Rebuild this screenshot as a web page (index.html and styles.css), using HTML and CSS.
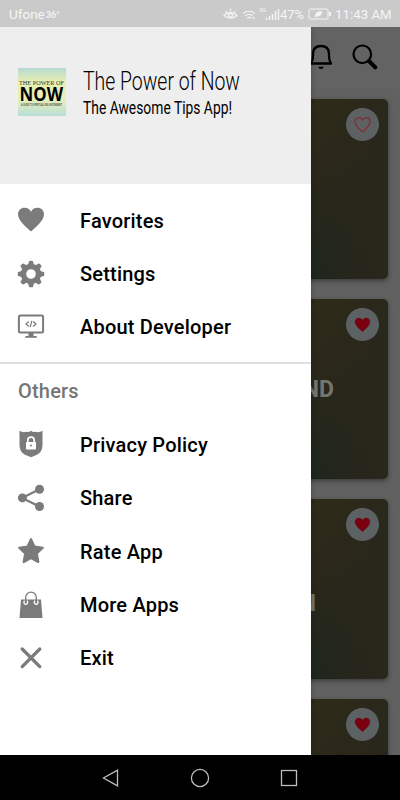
FILE: index.html
```
<!DOCTYPE html>
<html lang="en">
<head>
<meta charset="utf-8">
<title>The Power of Now</title>
<link rel="stylesheet" href="styles.css">
</head>
<body>
<svg class="defs" width="0" height="0">
  <defs>
    <path id="heart" d="M12 21.4C8 17.8 1 12.2 1 6.9 1 3.4 3.6 1 6.7 1 9.100 1 11 2.300 12 4.300 13 2.300 14.900 1 17.300 1 20.400 1 23 3.400 23 6.900 23 12.200 16 17.800 12 21.400Z"/>
  </defs>
</svg>
<div class="screen">
  <div class="status">
    <span class="carrier">Ufone</span><span class="temp">36°</span>
    <svg class="status-icons" width="71" height="20" viewBox="0 0 71 20" fill="none" stroke="#f4f4f4">
      <path d="M3 11.500Q9.500 5 16 11.500Q9.500 17 3 11.500ZM4.500 7L6 8.500M9.500 4.500V7M14.500 7L13 8.500" stroke-width="1.200"/>
      <circle cx="9.500" cy="11.300" r="2" stroke-width="1.500"/>
      <path d="M22 9.500Q28 5 34 9.500M24 12Q28 8.500 32 12M26 14.200Q28 12.500 30 14.200M31 14h3" stroke-width="1.200"/>
      <text x="38" y="8" class="net">3G</text>
      <path d="M45.500 16v-2M48.500 16v-4M51.500 16v-6M54.500 16v-9M57.500 16V5" stroke-width="1.500"/>
    </svg>
    <span class="percent">47%</span>
    <svg class="battery" width="24" height="14" viewBox="0 0 24 14" fill="none" stroke="#f4f4f4">
      <rect x="1" y="2" width="19" height="10" rx="1"/>
      <path d="M22 5v4" stroke-width="2"/>
      <path d="M7 11Q6 4 14 4Q14 10 8 9.500Z" fill="#f4f4f4" stroke="none"/>
    </svg>
    <span class="clock">11:43 AM</span>
  </div>
  <div class="stage">
    <main class="page">
      <header class="toolbar">
        <svg class="bell" width="28" height="28" viewBox="0 0 28 28" fill="none" stroke="#000" stroke-width="2.300">
          <path d="M4 20.500C6.500 17 6 14 6 11C6 6 9 3 14 3S22 6 22 11C22 14 21.500 17 24 20.500Z" stroke-linejoin="round"/>
          <path d="M11.300 23.800h5.400q-.5 2.200-2.700 2.200t-2.700-2.200Z" fill="#000" stroke="none"/>
        </svg>
        <svg class="search" width="26" height="26" viewBox="0 0 26 26" fill="none" stroke="#000">
          <circle cx="10.300" cy="10.300" r="8.800" stroke-width="2.200"/>
          <path d="M17 17L23.300 23.300" stroke-width="4" stroke-linecap="round"/>
        </svg>
      </header>
      <section class="cards">
        <article class="card"><span class="fav"><svg width="17" height="16" viewBox="0 0 24 23"><use href="#heart" fill="none" stroke="#8a2733" stroke-width="1.700"/></svg></span></article>
        <article class="card"><span class="fav"><svg width="17" height="16" viewBox="0 0 24 23"><use href="#heart" fill="#78000f"/></svg></span><p class="quote">ND</p></article>
        <article class="card"><span class="fav"><svg width="17" height="16" viewBox="0 0 24 23"><use href="#heart" fill="#78000f"/></svg></span><p class="quote short">N</p></article>
        <article class="card"><span class="fav"><svg width="17" height="16" viewBox="0 0 24 23"><use href="#heart" fill="#78000f"/></svg></span></article>
      </section>
    </main>
    <aside class="drawer">
      <div class="brand">
        <svg class="cover" width="48" height="48" viewBox="0 0 48 48">
          <defs>
            <linearGradient id="sky" x1="0" y1="0" x2="0" y2="1">
              <stop offset="0" stop-color="#b6d9d4"/><stop offset=".3" stop-color="#e9efb0"/>
              <stop offset=".65" stop-color="#e8efba"/><stop offset="1" stop-color="#b9ded6"/>
            </linearGradient>
          </defs>
          <rect width="48" height="48" fill="url(#sky)"/>
          <text class="cover-top" x="1" y="16.800" textLength="45" lengthAdjust="spacingAndGlyphs">THE POWER OF</text>
          <text class="cover-now" x="1.500" y="33" textLength="43.500" lengthAdjust="spacingAndGlyphs">NOW</text>
          <text class="cover-sub" x="3" y="37.800" textLength="41" lengthAdjust="spacingAndGlyphs">A GUIDE TO SPIRITUAL ENLIGHTENMENT</text>
        </svg>
        <svg class="titles" width="162" height="56" viewBox="0 0 162 56">
          <text class="title" x="0" y="25.500" textLength="157" lengthAdjust="spacingAndGlyphs">The Power of Now</text>
          <text class="subtitle" x="0" y="49.500" textLength="149" lengthAdjust="spacingAndGlyphs">The Awesome Tips App!</text>
        </svg>
      </div>
      <nav class="menu">
        <a class="item"><svg class="icon" viewBox="0 0 28 28"><path d="M14 25.500C9 21 1 14.500 1 8.300 1 4.500 4 1.800 7.500 1.800 10.500 1.800 12.800 3.300 14 5.800 15.200 3.300 17.500 1.800 20.500 1.800 24 1.800 27 4.500 27 8.300 27 14.500 19 21 14 25.500Z"/></svg><span>Favorites</span></a>
        <a class="item"><svg class="icon" viewBox="0 0 28 28"><g><circle cx="14" cy="14" r="7.500" fill="none" stroke="#7b7b7b" stroke-width="5.400"/><g id="teeth"><path id="tooth" d="M10.800 5.500L12 1.200Q12.200.7 14 .7T16 1.200L17.200 5.500Z"/><use href="#tooth" transform="rotate(45 14 14)"/><use href="#tooth" transform="rotate(90 14 14)"/><use href="#tooth" transform="rotate(135 14 14)"/></g><use href="#teeth" transform="rotate(180 14 14)"/></g></svg><span>Settings</span></a>
        <a class="item"><svg class="icon" viewBox="0 0 28 28"><rect x="1.900" y="2.500" width="24.200" height="17" rx="1.500" fill="none" stroke="#7b7b7b" stroke-width="2"/><path d="M11.500 20h5v3h2.500q1 0 1 1.800H8q0-1.800 1-1.800h2.500Z"/><path d="M11.800 8.500L9 11l2.800 2.500M16.200 8.500L19 11l-2.800 2.500M14.800 7.800l-1.600 6.400" fill="none" stroke="#7b7b7b" stroke-width="1.200"/></svg><span>About Developer</span></a>
        <div class="divider"></div>
        <h2 class="heading">Others</h2>
        <a class="item"><svg class="icon" viewBox="0 0 28 28"><path d="M2.500.8Q6 3 9 1.800Q12 2.500 14 .8Q16 2.500 19 1.800Q22 3 25.500.8V15Q25.500 22 20 24.800L14 27.300 8 24.800Q2.500 22 2.500 15Z"/><rect x="9" y="12" width="10" height="7.500" rx=".8" fill="#fff"/><path d="M10.800 12.500v-2.200a3.200 3.200 0 0 1 6.400 0v2.200" fill="none" stroke="#fff" stroke-width="1.700"/><circle cx="14" cy="15.600" r="1"/></svg><span>Privacy Policy</span></a>
        <a class="item"><svg class="icon" viewBox="0 0 28 28"><path d="M22.500 5.200L5 14l17.500 8.500" fill="none" stroke="#7b7b7b" stroke-width="2.200"/><circle cx="22.500" cy="5.200" r="4.500"/><circle cx="5.400" cy="13.900" r="4.500"/><circle cx="22.500" cy="22.500" r="4.500"/></svg><span>Share</span></a>
        <a class="item"><svg class="icon" viewBox="0 0 28 28"><path d="M14 2.200L17.500 9.700 25.800 10.800 19.800 16.500 21.300 25 14 21 6.700 25 8.200 16.500 2.200 10.800 10.500 9.700Z" stroke="#7b7b7b" stroke-width="2.200" stroke-linejoin="round"/></svg><span>Rate App</span></a>
        <a class="item"><svg class="icon" viewBox="0 0 28 28"><path d="M4 8.500H24L25.500 27H2.500Z"/><path d="M8.700 12V6.500a5.300 5.300 0 0 1 10.600 0V12" fill="none" stroke="#7b7b7b" stroke-width="1.300"/><g fill="none" stroke="#fff" stroke-width="1.300"><path d="M7.700 9.800a1.900 1.900 0 1 0 2.200 0"/><path d="M18.100 9.800a1.900 1.900 0 1 0 2.200 0"/></g></svg><span>More Apps</span></a>
        <a class="item"><svg class="icon" viewBox="0 0 28 28"><path d="M5.200 5L22.800 22.600M22.800 5L5.200 22.600" fill="none" stroke="#7b7b7b" stroke-width="3.300" stroke-linecap="round"/></svg><span>Exit</span></a>
      </nav>
    </aside>
  </div>
  <footer class="navbar">
    <svg width="18" height="20" viewBox="0 0 18 20"><path d="M15.500 2.200V17.800L1.500 10Z"/></svg>
    <svg width="20" height="20" viewBox="0 0 20 20"><circle cx="10" cy="10" r="8.600"/></svg>
    <svg width="18" height="20" viewBox="0 0 18 20"><rect x="1.500" y="2.500" width="15" height="15"/></svg>
  </footer>
</div>
</body>
</html>
```
FILE: styles.css
```
* { box-sizing: border-box; }
body { margin: 0; font-family: Roboto, sans-serif; }
.defs { position: absolute; }
.screen { width: 400px; height: 800px; overflow: hidden; display: flex; flex-direction: column; background: #000; }
.status { flex: none; height: 27px; background: #cacaca; color: #f6f6f6; display: flex; align-items: center; padding: 1px 8px 0 9px; font-size: 13px; white-space: nowrap; }
.carrier { width: 37px; font-size: 13.500px; }
.temp { font-size: 9px; font-weight: 500; padding-top: 1px; }
.status-icons { margin-left: auto; flex: none; margin-right: -12px; }
.net { font-size: 6px; fill: #f4f4f4; stroke: none; }
.percent { width: 26px; }
.battery { margin: 0 3px 0 2px; flex: none; }
.clock { width: 57px; font-size: 13.300px; }
.stage { height: 728px; flex: none; display: grid; overflow: hidden; }
.page, .drawer { grid-area: 1 / 1; }
.page { height: 728px; overflow: hidden; background: #616161; }
.toolbar { height: 62px; background: #636363; display: flex; align-items: center; justify-content: flex-end; padding: 0 22px 2px 0; gap: 17px; }
.cards { display: flex; flex-direction: column; gap: 20px; padding: 10px 12px 0; }
.card { flex: none; height: 180px; border-radius: 5px; background: linear-gradient(100deg, transparent 78%, #29261c 96%), linear-gradient(180deg, #2e2b19, #29271b 52%, #1b271c); box-shadow: 0 2px 5px #3b3b3b; display: flex; flex-direction: column; align-items: flex-end; padding: 9px 9px 0 0; }
.fav { width: 33px; height: 33px; border-radius: 50%; background: #5c6163; display: flex; align-items: center; justify-content: center; }
.quote { margin: 35px 45px 0 0; font-size: 23px; line-height: 27px; font-weight: 700; color: #74756c; }
.short { margin: 49px 63px 0 0; }
.drawer { width: 311px; height: 728px; background: #fff; box-shadow: 0 0 5px #1115; z-index: 1; }
.brand { height: 157px; background: #eee; display: flex; align-items: flex-start; padding: 41px 0 0 18px; }
.titles { margin: -4px 0 0 17px; }
.title { font: 300 26px Roboto, sans-serif; }
.subtitle { font: 400 18px Roboto, sans-serif; }
.cover-top { font: 7px "Liberation Serif", serif; fill: #353a30; }
.cover-now { font: bold 19.500px "Open Sans", sans-serif; }
.cover-sub { font: bold 3px "Liberation Sans", sans-serif; fill: #555a4c; }
.menu { padding-top: 10px; }
.item { height: 53.400px; display: flex; align-items: center; padding-left: 17px; gap: 35px; font-size: 20px; font-weight: 500; letter-spacing: .2px; color: #000; }
.icon { width: 28px; height: 28px; fill: #7b7b7b; flex: none; margin-top: -1px; }
.divider { height: 2px; margin-top: 8px; background: #e0e0e0; }
.heading { margin: 0; padding: 0 0 0 18px; height: 54px; line-height: 55px; font-size: 20px; font-weight: 500; letter-spacing: .2px; color: #757575; }
.navbar { height: 45px; display: flex; justify-content: center; align-items: center; gap: 70px; }
.navbar svg { fill: none; stroke: #bdbdbd; stroke-width: 1.300; }
```
